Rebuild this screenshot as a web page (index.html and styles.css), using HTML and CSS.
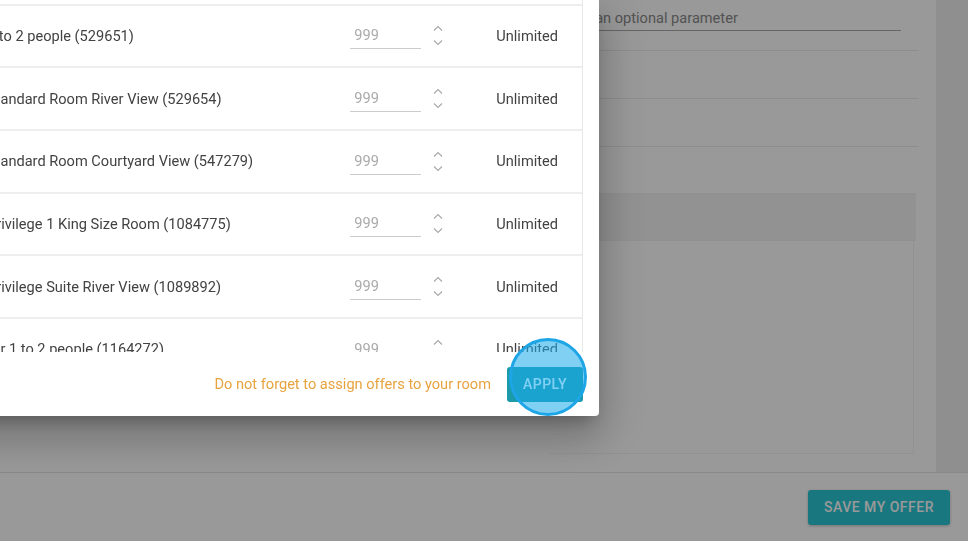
FILE: index.html
```html
<!DOCTYPE html>
<html lang="en">
<head>
    <meta charset="UTF-8">
    <meta name="viewport" content="width=device-width, initial-scale=1.0">
    <title>Edit offer - room allocation</title>
    <link rel="stylesheet" href="styles.css">
</head>
<body>
    <div class="page">
        <div class="top">
            <div class="main">
                <div class="form">
                    <div class="field first">
                        <div class="text-input">This is an optional parameter</div>
                    </div>
                    <div class="field"></div>
                    <div class="field"></div>
                    <div class="field plain"></div>
                    <div class="field shaded"></div>
                    <div class="panel"></div>
                </div>
            </div>
            <div class="side"></div>
        </div>
        <div class="bar">
            <button class="save-btn">Save my offer</button>
        </div>
    </div>

    <!-- modal backdrop -->
    <div class="shade"></div>

    <!-- room allocation dialog -->
    <div class="dialog">
        <div class="list">
            <div class="list-inner">
                <div class="row">
                    <span class="name">Classic Room Garden View (529650)</span>
                    <span class="qty">999</span>
                    <span class="spin">
                        <svg width="10" height="6" viewBox="0 0 10 6"><path d="M1 5.5L5 1.5L9 5.5" /></svg>
                        <svg width="10" height="6" viewBox="0 0 10 6"><path d="M1 0.5L5 4.5L9 0.5" /></svg>
                    </span>
                    <span class="limit">Unlimited</span>
                </div>
                <div class="row">
                    <span class="name">1 to 2 people (529651)</span>
                    <span class="qty">999</span>
                    <span class="spin">
                        <svg width="10" height="6" viewBox="0 0 10 6"><path d="M1 5.5L5 1.5L9 5.5" /></svg>
                        <svg width="10" height="6" viewBox="0 0 10 6"><path d="M1 0.5L5 4.5L9 0.5" /></svg>
                    </span>
                    <span class="limit">Unlimited</span>
                </div>
                <div class="row">
                    <span class="name">Standard Room River View (529654)</span>
                    <span class="qty">999</span>
                    <span class="spin">
                        <svg width="10" height="6" viewBox="0 0 10 6"><path d="M1 5.5L5 1.5L9 5.5" /></svg>
                        <svg width="10" height="6" viewBox="0 0 10 6"><path d="M1 0.5L5 4.5L9 0.5" /></svg>
                    </span>
                    <span class="limit">Unlimited</span>
                </div>
                <div class="row">
                    <span class="name">Standard Room Courtyard View (547279)</span>
                    <span class="qty">999</span>
                    <span class="spin">
                        <svg width="10" height="6" viewBox="0 0 10 6"><path d="M1 5.5L5 1.5L9 5.5" /></svg>
                        <svg width="10" height="6" viewBox="0 0 10 6"><path d="M1 0.5L5 4.5L9 0.5" /></svg>
                    </span>
                    <span class="limit">Unlimited</span>
                </div>
                <div class="row">
                    <span class="name">Privilege 1 King Size Room (1084775)</span>
                    <span class="qty">999</span>
                    <span class="spin">
                        <svg width="10" height="6" viewBox="0 0 10 6"><path d="M1 5.5L5 1.5L9 5.5" /></svg>
                        <svg width="10" height="6" viewBox="0 0 10 6"><path d="M1 0.5L5 4.5L9 0.5" /></svg>
                    </span>
                    <span class="limit">Unlimited</span>
                </div>
                <div class="row">
                    <span class="name">Privilege Suite River View (1089892)</span>
                    <span class="qty">999</span>
                    <span class="spin">
                        <svg width="10" height="6" viewBox="0 0 10 6"><path d="M1 5.5L5 1.5L9 5.5" /></svg>
                        <svg width="10" height="6" viewBox="0 0 10 6"><path d="M1 0.5L5 4.5L9 0.5" /></svg>
                    </span>
                    <span class="limit">Unlimited</span>
                </div>
                <div class="row">
                    <span class="name">for 1 to 2 people (1164272)</span>
                    <span class="qty">999</span>
                    <span class="spin">
                        <svg width="10" height="6" viewBox="0 0 10 6"><path d="M1 5.5L5 1.5L9 5.5" /></svg>
                        <svg width="10" height="6" viewBox="0 0 10 6"><path d="M1 0.5L5 4.5L9 0.5" /></svg>
                    </span>
                    <span class="limit">Unlimited</span>
                </div>
            </div>
        </div>
        <div class="foot">
            <span class="warn">Do not forget to assign offers to your room</span>
            <button class="apply-btn">Apply</button>
        </div>
    </div>

    <!-- click highlight -->
    <div class="spot"></div>
</body>
</html>
```

FILE: styles.css
```css
body {
    font-family: Roboto, "Noto Sans", Arial, sans-serif;
    margin: 0;
    padding: 0;
    background-color: #fff;
    overflow: hidden;
    height: 541px;
}
.page {
    display: grid;
    grid-template-rows: 472px 69px;
    height: 541px;
}
.top {
    display: flex;
}
.main {
    flex: 1;
    padding-right: 18px;
}
.side {
    width: 32px;
    background-color: #eeeeee;
}
.form {
    margin-left: auto;
    width: 369px;
}
.field {
    height: 47px;
    border-bottom: 1px solid #ececec;
}
.field.first {
    height: 51px;
    box-sizing: border-box;
    padding-top: 9px;
}
.field.plain {
    height: 46px;
    border-bottom: none;
}
.field.shaded {
    height: 46px;
    margin-right: 2px;
    background-color: #f4f4f4;
    border-top: 1px solid #f0f0f0;
    border-bottom: 1px solid #f0f0f0;
}
.text-input {
    margin-right: 17px;
    font-size: 14.6px;
    line-height: 18px;
    color: #8a8a8a;
    padding-bottom: 3px;
    border-bottom: 1px solid #aaaaaa;
}
.panel {
    height: 212px;
    margin-right: 4px;
    border-right: 1px solid #f4f4f4;
    border-bottom: 1px solid #f4f4f4;
}
/* bottom action bar */
.bar {
    display: flex;
    align-items: center;
    justify-content: flex-end;
    padding-right: 18px;
    border-top: 1px solid #e4e4e4;
    background-color: #fff;
}
.save-btn {
    height: 35px;
    padding: 0 16px;
    font-family: Roboto, Arial, sans-serif;
    font-size: 14px;
    font-weight: 500;
    letter-spacing: 0.5px;
    text-transform: uppercase;
    color: #fff;
    background-color: #2bc6d5;
    border: none;
    border-radius: 3px;
    box-shadow: 0 1px 3px rgba(0, 0, 0, 0.25);
}
.shade {
    position: fixed;
    top: 0;
    left: 0;
    right: 0;
    bottom: 0;
    background-color: rgba(0, 0, 0, 0.4);
}
/* dialog */
.dialog {
    position: absolute;
    top: 0;
    left: -401px;
    width: 1000px;
    background-color: #fff;
    border-radius: 0 0 4px 4px;
    box-shadow: 0 11px 15px -7px rgba(0, 0, 0, 0.25), 0 24px 38px 3px rgba(0, 0, 0, 0.14), 0 9px 46px 8px rgba(0, 0, 0, 0.12);
}
.list {
    height: 352px;
    overflow: hidden;
    margin-right: 16px;
    border-right: 1px solid #e8e8e8;
}
.list-inner {
    margin-top: -59.2px;
}
.row {
    display: flex;
    align-items: center;
    height: 62.7px;
    box-sizing: border-box;
    border-top: 2px solid #eeeeee;
    padding-left: 388px;
    padding-right: 24px;
    font-size: 14.6px;
    color: #424242;
}
.name {
    flex: 1;
    white-space: nowrap;
}
.qty {
    width: 63px;
    padding: 5px 4px 4px;
    line-height: 17px;
    color: #aaaaaa;
    border-bottom: 1px solid #cccccc;
}
.spin {
    display: flex;
    flex-direction: column;
    gap: 9px;
    margin-left: 12px;
    width: 10px;
}
.spin svg {
    display: block;
    fill: none;
    stroke: #a8a8a8;
    stroke-width: 1.1;
}
.limit {
    margin-left: 53px;
}
.foot {
    height: 64px;
    display: flex;
    align-items: center;
    justify-content: flex-end;
    gap: 16px;
    padding-right: 16px;
}
.warn {
    font-size: 14.6px;
    color: #e7a33e;
}
.apply-btn {
    height: 35px;
    padding: 0 16px;
    font-family: Roboto, Arial, sans-serif;
    font-size: 14px;
    font-weight: 500;
    letter-spacing: 0.5px;
    text-transform: uppercase;
    color: #fff;
    background-color: #1b9aaa;
    border: none;
    border-radius: 3px;
}
/* click highlight circle */
.spot {
    position: absolute;
    left: 509px;
    top: 338px;
    width: 78px;
    height: 78px;
    box-sizing: border-box;
    border: 3px solid #1da5e6;
    border-radius: 50%;
    background-color: rgba(29, 171, 236, 0.56);
}
```
